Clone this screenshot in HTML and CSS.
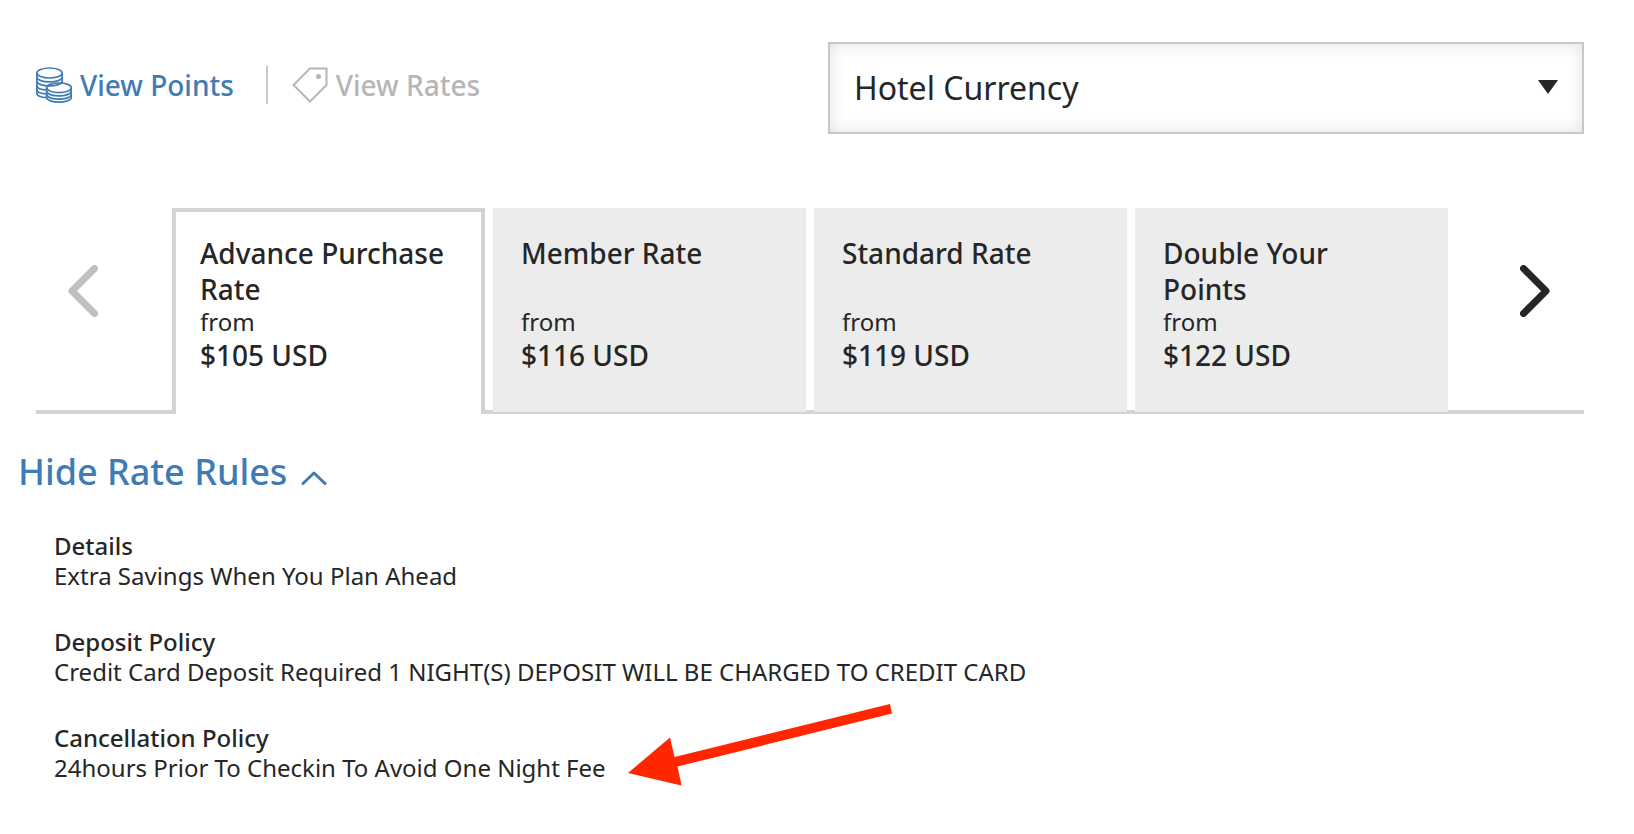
FILE: index.html
```html
<!DOCTYPE html>
<html lang="en">
<head>
    <meta charset="UTF-8">
    <meta name="viewport" content="width=device-width, initial-scale=1.0">
    <title>Room Rates</title>
    <link rel="stylesheet" href="styles.css">
</head>
<body>
    <div class="toolbar">
        <div class="views">
            <a class="view active" href="#points">
                <svg class="view-icon" viewBox="0 0 36 36" width="36" height="36" aria-hidden="true">
                    <g fill="none" stroke="currentColor" stroke-width="1.700">
                        <ellipse cx="13.500" cy="6" rx="12.700" ry="5"/>
                        <path d="M.8 6v20.500c0 2 4 4 9.500 4.200M26.200 6v9.500"/>
                        <path d="M.8 10c0 6.500 25.400 6.500 25.400 0M.8 14c0 6.500 25.400 6.500 25.400 0M.8 18c0 3 4 4.800 9.500 4.900M.8 22c0 3 4 4.800 9.500 4.900"/>
                        <ellipse cx="23" cy="20.800" rx="12.400" ry="4.800"/>
                        <path d="M10.600 20.800v9.400c0 6.500 24.800 6.500 24.800 0v-9.400"/>
                        <path d="M10.600 24c0 6.500 24.800 6.500 24.800 0M10.600 27.200c0 6.500 24.800 6.500 24.800 0"/>
                    </g>
                </svg>
                View Points
            </a>
            <a class="view" href="#rates">
                <svg class="view-icon" viewBox="0 0 36 36" width="36" height="36" aria-hidden="true">
                    <path d="M18 1.500h16.500V18L18 34.500 1.500 18z" fill="none" stroke="currentColor" stroke-width="2"/>
                    <circle cx="26.500" cy="9.500" r="2.500" fill="currentColor"/>
                </svg>
                View Rates
            </a>
        </div>
        <div class="currency">
            <select class="currency-select" aria-label="Currency">
                <option>Hotel Currency</option>
            </select>
            <svg class="currency-arrow" viewBox="0 0 20 14" width="20" height="14" aria-hidden="true">
                <path d="M0 0h20L10 14z" fill="currentColor"/>
            </svg>
        </div>
    </div>

    <div class="rates">
        <button class="arrow prev" aria-label="Previous rates" disabled>
            <svg viewBox="0 0 30 52" width="30" height="52" aria-hidden="true">
                <path d="M26.500 3.500L4 26l22.500 22.500"/>
            </svg>
        </button>
        <div class="tabs" role="tablist">
            <button class="tab selected" role="tab" aria-selected="true">
                <span class="name">Advance Purchase Rate</span>
                <span class="from">from</span>
                <span class="price">$105 USD</span>
            </button>
            <button class="tab" role="tab">
                <span class="name">Member Rate</span>
                <span class="from">from</span>
                <span class="price">$116 USD</span>
            </button>
            <button class="tab" role="tab">
                <span class="name">Standard Rate</span>
                <span class="from">from</span>
                <span class="price">$119 USD</span>
            </button>
            <button class="tab" role="tab">
                <span class="name">Double Your Points</span>
                <span class="from">from</span>
                <span class="price">$122 USD</span>
            </button>
        </div>
        <button class="arrow next" aria-label="Next rates">
            <svg viewBox="0 0 30 52" width="30" height="52" aria-hidden="true">
                <path d="M3.500 3.500L26 26 3.500 48.500"/>
            </svg>
        </button>
    </div>

    <button class="toggle" aria-expanded="true">
        Hide Rate Rules
        <svg class="toggle-icon" viewBox="0 0 26 14" width="26" height="14" aria-hidden="true">
            <path d="M2 12.500L13 2l11 10.500"/>
        </svg>
    </button>

    <div class="rules">
        <div class="rule">
            <h3>Details</h3>
            <p>Extra Savings When You Plan Ahead</p>
        </div>
        <div class="rule">
            <h3>Deposit Policy</h3>
            <p>Credit Card Deposit Required 1 NIGHT(S) DEPOSIT WILL BE CHARGED TO CREDIT CARD</p>
        </div>
        <div class="rule">
            <h3>Cancellation Policy</h3>
            <p class="marked">
                24hours Prior To Checkin To Avoid One Night Fee
                <svg class="pointer" viewBox="0 0 266 84" width="266" height="84" aria-hidden="true">
                    <path d="M0 70L42 34.500 46.500 54 262 1 264 10.500 49.500 63.500 53.500 82.500z" fill="#ff2600"/>
                </svg>
            </p>
        </div>
    </div>
</body>
</html>
```

FILE: styles.css
```css
* {
    box-sizing: border-box;
}
body {
    margin: 0;
    padding: 42px 50px 32px 36px;
    font-family: "Noto Sans", sans-serif;
    font-size: 24px;
    line-height: 30px;
    color: #262626;
    background-color: #fff;
}
button {
    margin: 0;
    padding: 0;
    border: none;
    background: none;
    font-family: inherit;
    color: inherit;
    text-align: left;
    cursor: pointer;
}
.toolbar {
    display: flex;
    justify-content: space-between;
    align-items: flex-start;
    margin-bottom: 74px;
}
.views {
    display: flex;
    padding-top: 24px;
}
.view {
    display: flex;
    align-items: center;
    gap: 8px;
    height: 38px;
    font-size: 28px;
    font-weight: 500;
    color: #b6b6b6;
    text-decoration: none;
}
.view.active {
    color: #3f7cb3;
}
.view + .view {
    margin-left: 32px;
    padding-left: 24px;
    border-left: 2px solid #c8c8c8;
}
.currency {
    position: relative;
    width: 756px;
}
.currency-select {
    display: block;
    width: 100%;
    height: 92px;
    padding: 0 24px 2px;
    border: 2px solid #c8c8c8;
    border-radius: 0;
    background-color: #fff;
    box-shadow: inset 0 0 16px rgba(0, 0, 0, 0.12);
    font-family: inherit;
    font-size: 32px;
    color: inherit;
    appearance: none;
}
.currency-arrow {
    position: absolute;
    top: 38px;
    right: 26px;
    pointer-events: none;
}
.rates {
    display: flex;
    background: linear-gradient(#d3d3d3, #d3d3d3) bottom / 100% 4px no-repeat;
}
.arrow {
    display: flex;
    align-items: center;
    justify-content: center;
    width: 136px;
    padding-bottom: 40px;
}
.arrow path {
    fill: none;
    stroke: currentColor;
    stroke-width: 7;
    stroke-linecap: round;
    stroke-linejoin: round;
}
.prev {
    padding-right: 42px;
}
.next {
    padding-left: 38px;
}
.arrow:disabled {
    color: #bfbfbf;
}
.tabs {
    display: grid;
    grid-template-columns: repeat(4, 1fr);
    gap: 8px;
    flex: 1;
}
.tab {
    display: flex;
    flex-direction: column;
    height: 206px;
    padding: 27px 36px 0 28px;
    border-bottom: 2px solid #d3d3d3;
    background-color: #ececec;
}
.tab.selected {
    padding: 23px 32px 0 24px;
    border: 4px solid #d3d3d3;
    border-bottom: none;
    background-color: #fff;
}
.name {
    min-height: 72px;
    font-size: 28px;
    font-weight: 500;
    line-height: 36px;
}
.from {
    font-size: 24px;
    line-height: 30px;
}
.price {
    font-size: 28px;
    font-weight: 500;
    line-height: 36px;
}
.toggle {
    display: flex;
    align-items: center;
    gap: 14px;
    margin: 33px 0 34px -18px;
    font-size: 36px;
    font-weight: 500;
    line-height: 50px;
    color: #3f7cb3;
}
.toggle-icon {
    margin-top: 12px;
    fill: none;
    stroke: currentColor;
    stroke-width: 3;
    stroke-linecap: round;
    stroke-linejoin: round;
}
.rules {
    display: flex;
    flex-direction: column;
    gap: 36px;
    padding-left: 18px;
}
.rule h3 {
    margin: 0;
    font-size: 24px;
    font-weight: 500;
}
.rule p {
    margin: 0;
}
.marked {
    position: relative;
    width: fit-content;
}
/* red arrow pointing at the cancellation terms */
.pointer {
    position: absolute;
    left: calc(100% + 22px);
    bottom: -4px;
}
```
